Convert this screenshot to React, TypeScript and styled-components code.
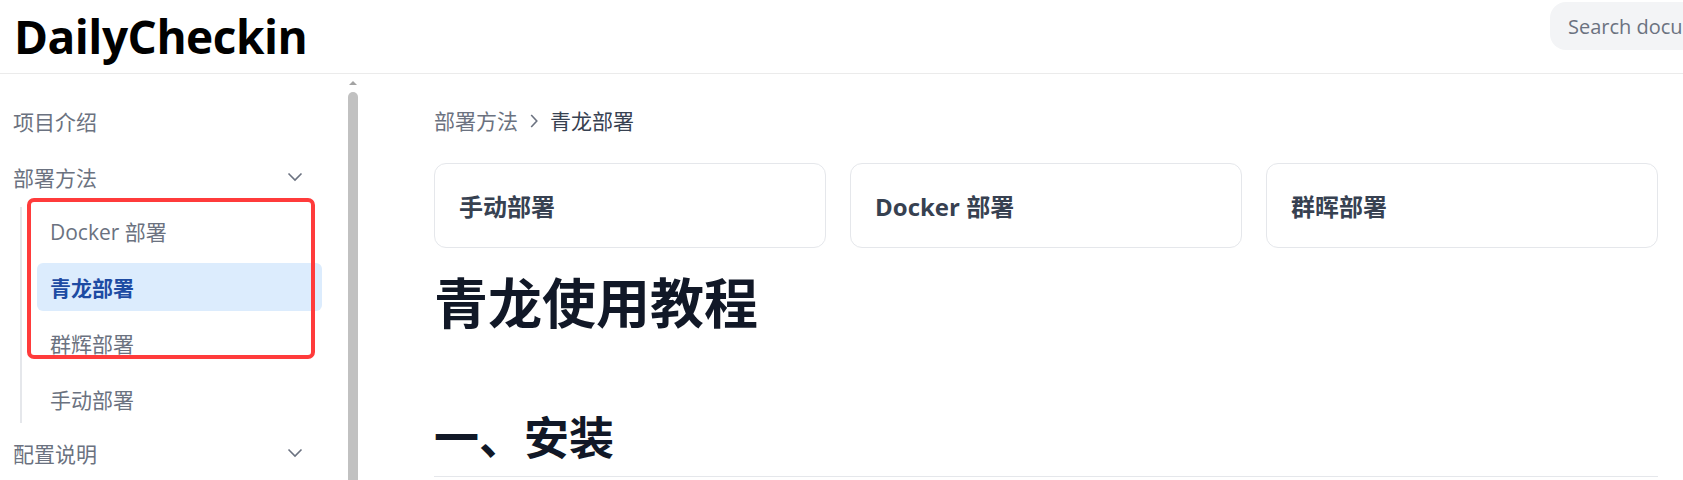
import React from "react";
import styled, { createGlobalStyle } from "styled-components";

const GlobalStyle = createGlobalStyle`
  html, body {
    margin: 0;
    padding: 0;
    background: #ffffff;
    overflow: hidden;
  }
  * {
    box-sizing: border-box;
  }
`;

const FONT = `"Open Sans", "Noto Sans CJK SC", sans-serif`;

const Page = styled.div`
  height: 100vh;
  overflow: hidden;
  font-family: ${FONT};
  display: flex;
  flex-direction: column;
`;

const Header = styled.header`
  height: 74px;
  flex-shrink: 0;
  display: flex;
  align-items: center;
  padding-left: 14px;
  border-bottom: 1px solid #ebebeb;
  overflow: hidden;
`;

const Logo = styled.div`
  font-size: 46px;
  font-weight: 700;
  color: #000000;
  letter-spacing: -0.5px;
  margin-top: -2px;
`;

const Search = styled.div`
  margin-left: auto;
  margin-right: -167px;
  align-self: flex-start;
  margin-top: 2px;
  width: 300px;
  height: 48px;
  border-radius: 16px;
  background: #f3f4f6;
  display: flex;
  align-items: center;
  padding-left: 18px;
  font-size: 20px;
  color: #6b7280;
  white-space: nowrap;
`;

const Body = styled.div`
  flex: 1;
  display: flex;
  min-height: 0;
`;

const Sidebar = styled.aside`
  width: 358px;
  flex-shrink: 0;
  display: flex;
`;

const Nav = styled.nav`
  flex: 1;
  padding: 23px 26px 0 13px;
  display: flex;
  flex-direction: column;
  gap: 8px;
`;

const NavItem = styled.div`
  height: 48px;
  display: flex;
  align-items: center;
  justify-content: space-between;
  font-size: 21px;
  color: #6b7280;
  padding-right: 19px;
`;

const SubList = styled.div`
  position: relative;
  margin: -2px 0 -2px 7px;
  border-left: 2px solid #e5e7eb;
  padding-left: 15px;
  display: flex;
  flex-direction: column;
  gap: 8px;
`;

const SubItem = styled.div<{ $active?: boolean }>`
  height: 48px;
  display: flex;
  align-items: center;
  padding-left: 13px;
  border-radius: 6px;
  font-size: 21px;
  background: ${(p) => (p.$active ? "#dcecfd" : "transparent")};
  color: ${(p) => (p.$active ? "#1d4ba3" : "#6b7280")};
  font-weight: ${(p) => (p.$active ? 700 : 400)};
`;

const Highlight = styled.div`
  position: absolute;
  left: 5px;
  top: -9px;
  width: 288px;
  height: 161px;
  border: 4px solid #ff3b3b;
  border-radius: 7px;
  pointer-events: none;
`;

const Rail = styled.div`
  width: 10px;
  flex-shrink: 0;
  display: flex;
  flex-direction: column;
  align-items: center;
  padding-top: 7px;
`;

const RailArrow = styled.div`
  width: 0;
  height: 0;
  border-left: 4px solid transparent;
  border-right: 4px solid transparent;
  border-bottom: 4px solid #a3a3a3;
`;

const Thumb = styled.div`
  margin-top: 7px;
  width: 10px;
  flex: 1;
  margin-bottom: -20px;
  background: #c1c1c1;
  border-radius: 5px 5px 0 0;
`;

const Main = styled.main`
  flex: 1;
  padding: 33px 25px 0 76px;
  display: flex;
  flex-direction: column;
`;

const Breadcrumb = styled.div`
  display: flex;
  align-items: center;
  gap: 12px;
  font-size: 21px;
  line-height: 28px;
  color: #6b7280;
`;

const Current = styled.span`
  color: #374151;
`;

const Cards = styled.div`
  margin-top: 28px;
  display: grid;
  grid-template-columns: repeat(3, 1fr);
  gap: 24px;
`;

const Card = styled.div`
  height: 85px;
  border: 1px solid #e5e7eb;
  border-radius: 12px;
  display: flex;
  align-items: center;
  padding-left: 24px;
  font-size: 24px;
  font-weight: 700;
  color: #374151;
`;

const Title = styled.h1`
  margin: 22px 0 0;
  font-size: 54px;
  line-height: 66px;
  font-weight: 700;
  color: #111827;
`;

const Section = styled.h2`
  margin: 74px 0 0;
  font-size: 45px;
  line-height: 56px;
  font-weight: 700;
  color: #111827;
  padding-bottom: 10px;
  border-bottom: 1px solid #e5e7eb;
`;

const Chevron = ({ dir }: { dir: "down" | "right" }) =>
  dir === "down" ? (
    <svg width="16" height="10" viewBox="0 0 16 10" fill="none">
      <path d="M1.5 1.5 L8 8 L14.5 1.5" stroke="#6b7280" strokeWidth="1.6" />
    </svg>
  ) : (
    <svg width="8" height="14" viewBox="0 0 8 14" fill="none">
      <path d="M1.2 1 L6.8 7 L1.2 13" stroke="#6b7280" strokeWidth="1.6" />
    </svg>
  );

const subItems = [
  { label: "Docker 部署" },
  { label: "青龙部署", active: true },
  { label: "群辉部署" },
  { label: "手动部署" },
];

const cards = ["手动部署", "Docker 部署", "群晖部署"];

export default function App() {
  return (
    <Page>
      <GlobalStyle />
      <Header>
        <Logo>DailyCheckin</Logo>
        <Search>Search documentation</Search>
      </Header>
      <Body>
        <Sidebar>
          <Nav>
            <NavItem>项目介绍</NavItem>
            <NavItem>
              部署方法
              <Chevron dir="down" />
            </NavItem>
            <SubList>
              {subItems.map((s) => (
                <SubItem key={s.label} $active={s.active}>
                  {s.label}
                </SubItem>
              ))}
              <Highlight />
            </SubList>
            <NavItem>
              配置说明
              <Chevron dir="down" />
            </NavItem>
          </Nav>
          <Rail>
            <RailArrow />
            <Thumb />
          </Rail>
        </Sidebar>
        <Main>
          <Breadcrumb>
            <span>部署方法</span>
            <Chevron dir="right" />
            <Current>青龙部署</Current>
          </Breadcrumb>
          <Cards>
            {cards.map((c) => (
              <Card key={c}>{c}</Card>
            ))}
          </Cards>
          <Title>青龙使用教程</Title>
          <Section>一、安装</Section>
        </Main>
      </Body>
    </Page>
  );
}
